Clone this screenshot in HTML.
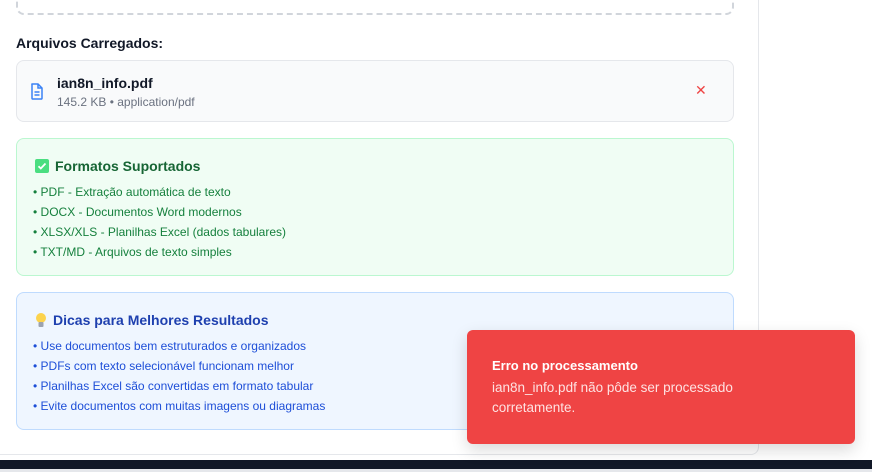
<!DOCTYPE html>
<html><head><meta charset="utf-8"><style>
*{box-sizing:border-box;margin:0;padding:0}
body{width:872px;height:472px;overflow:hidden;background:#fff;font-family:"Liberation Sans","DejaVu Sans",sans-serif;position:relative}
.card{position:absolute;left:-10px;top:-10px;width:769px;height:465px;border:1px solid #e5e7eb;border-radius:8px;background:#fff}
.dash{position:absolute;left:16px;top:-20px;width:718px;height:35px;border:2px dashed #d1d5db;border-radius:8px}
h3{position:absolute;left:16px;top:35px;font-size:14px;font-weight:bold;color:#111827}
.file{position:absolute;left:16px;top:60px;width:718px;height:62px;background:#f9fafb;border:1px solid #e5e7eb;border-radius:8px}
.fn{position:absolute;left:40px;top:14px;font-size:14px;font-weight:bold;color:#111827}
.fs{position:absolute;left:40px;top:34px;font-size:12px;color:#6b7280}
.x{position:absolute;left:678px;top:21px;color:#ef4444;font-size:14px}
.box{position:absolute;left:16px;width:718px;border-radius:8px;padding:19px 0 0 16px}
.green{top:138px;height:138px;background:#f0fdf4;border:1px solid #bbf7d0}
.blue{top:292px;height:138px;background:#eff6ff;border:1px solid #bfdbfe}
.box .t{font-size:14px;font-weight:bold;display:flex;align-items:center;gap:6px;margin-bottom:8px;margin-left:2px}
.green .t{color:#166534}.blue .t{color:#1e40af}
.box li{list-style:none;font-size:12px;line-height:20px}
.green li{color:#15803d}.blue li{color:#1d4ed8}
.bar{position:absolute;left:0;top:460px;width:872px;height:9px;background:#111827}
.bot{position:absolute;left:0;top:469px;width:872px;height:3px;background:#e5e7eb}
.toast{position:absolute;left:467px;top:330px;width:388px;height:114px;background:#ef4444;border-radius:6px;box-shadow:0 6px 16px rgba(0,0,0,.15);color:#fff;padding:28px 25px}
.toast b{display:block;font-size:13px;margin-bottom:5px}
.toast p{font-size:13.5px;line-height:20px;color:#fee2e2;width:265px}
</style></head><body>
<div class="card"></div>
<div class="dash"></div>
<h3>Arquivos Carregados:</h3>
<div class="file">
<svg style="position:absolute;left:13px;top:22px" width="14" height="17" viewBox="0 0 14 17" fill="none" stroke="#3b82f6" stroke-width="1.5"><path d="M2 1h6l4 4v10.2a.8.8 0 0 1-.8.8H2.8a.8.8 0 0 1-.8-.8V1.8A.8.8 0 0 1 2 1z"/><path d="M8 1v4h4M4.5 9h5M4.5 12h5"/></svg>
<div class="fn">ian8n_info.pdf</div>
<div class="fs">145.2 KB • application/pdf</div>
<div class="x">✕</div>
</div>
<div class="box green"><div class="t"><svg width="14" height="14" viewBox="0 0 14 14"><rect width="14" height="14" rx="2" fill="#4ade80"/><path d="M3.5 7.2l2.3 2.3 4.7-5" stroke="#fff" stroke-width="1.8" fill="none"/></svg>Formatos Suportados</div>
<ul><li>• PDF - Extração automática de texto</li><li>• DOCX - Documentos Word modernos</li><li>• XLSX/XLS - Planilhas Excel (dados tabulares)</li><li>• TXT/MD - Arquivos de texto simples</li></ul></div>
<div class="box blue"><div class="t"><svg width="12" height="16" viewBox="0 0 12 16"><circle cx="6" cy="6" r="5" fill="#fcd34d"/><rect x="3.5" y="10" width="5" height="5" rx="1" fill="#9ca3af"/></svg>Dicas para Melhores Resultados</div>
<ul><li>• Use documentos bem estruturados e organizados</li><li>• PDFs com texto selecionável funcionam melhor</li><li>• Planilhas Excel são convertidas em formato tabular</li><li>• Evite documentos com muitas imagens ou diagramas</li></ul></div>
<div class="bar"></div><div class="bot"></div>
<div class="toast"><b>Erro no processamento</b><p>ian8n_info.pdf não pôde ser processado corretamente.</p></div>
</body></html>
